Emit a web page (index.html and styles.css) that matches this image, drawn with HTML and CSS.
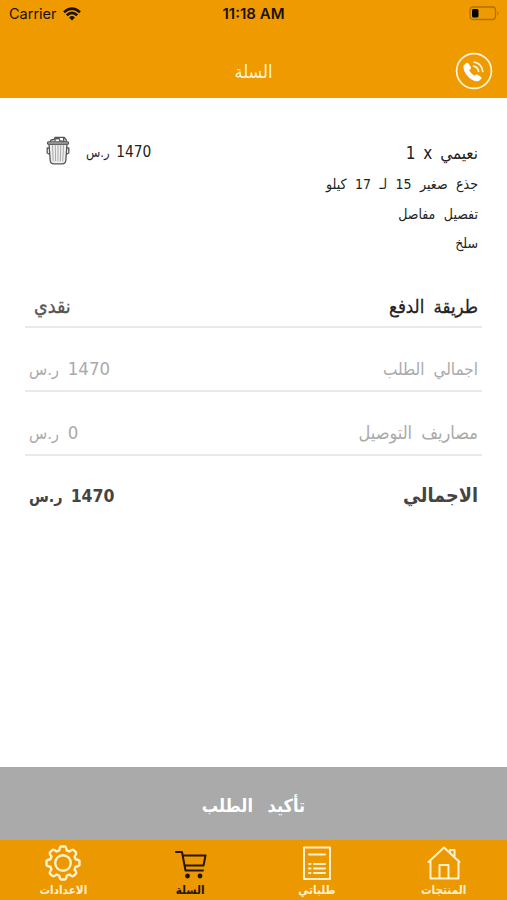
FILE: index.html
```html
<!DOCTYPE html>
<html lang="ar" dir="rtl">

<head>
    <meta charset="UTF-8">
    <meta name="viewport" content="width=device-width, initial-scale=1.0">
    <title>السلة</title>
    <link rel="stylesheet" href="styles.css">
</head>

<body>
    <div class="screen">
        <div class="status-bar" dir="ltr">
            <div class="carrier">
                <span>Carrier</span>
                <svg class="wifi" viewBox="0 0 18 14">
                    <path d="M1 5.2 Q9 -2 17 5.2" />
                    <path d="M3.8 8.2 Q9 3.4 14.2 8.2" />
                    <path class="wifi-dot" d="M6.1 10.4 Q9 7.8 11.9 10.4 L9 13.6 Z" />
                </svg>
            </div>
            <div class="clock">11:18 AM</div>
            <div class="battery-side">
                <svg class="battery" viewBox="0 0 31 15">
                    <rect x="1" y="1" width="25.5" height="12.5" rx="3" />
                    <path class="battery-tip" d="M28.3 5.2 Q31 7.2 28.3 9.4 Z" />
                    <rect class="battery-level" x="3" y="3" width="6.5" height="8.5" rx="1.5" />
                </svg>
            </div>
        </div>

        <header class="header" dir="ltr">
            <h1 class="header-title">السلة</h1>
            <svg class="call-btn" viewBox="0 0 38 38">
                <circle cx="19" cy="19" r="17.4" />
                <path class="phone" d="M8.6 13.6 L11.4 11 Q12.6 10.4 13.5 11.6 L15.8 15 Q16.4 16.2 15.5 17 L14.1 18.2 Q15.7 21.4 19.3 23.7 L20.9 22.6 Q21.8 22.1 22.8 22.8 L26 25 Q27 26 26.1 27 L23.8 29 Q19.5 30.5 14 25.6 Q7.4 19.4 8.6 13.6 Z" />
                <path d="M19.2 10.2 Q26.8 11.5 27.8 19.5" />
                <path d="M18.6 14.2 Q22.9 15 23.6 19.4" />
            </svg>
        </header>

        <main class="content">
            <section class="item">
                <div class="item-info">
                    <div class="item-name"><bdi>نعيمي</bdi> <bdi>x</bdi> <bdi>1</bdi></div>
                    <div class="item-size">جذع صغير 15 لـ 17 كيلو</div>
                    <div class="item-cut">تفصيل مفاصل</div>
                    <div class="item-skin">سلخ</div>
                </div>
                <div class="item-side">
                    <div class="item-price"><span class="num">1470</span> ر.س</div>
                    <svg class="trash" viewBox="0 0 24 29">
                        <path d="M4 6 L5 4 L8 3.5 L9 1.3 L18 1.3 L20 3.5 L20.5 6" />
                        <path d="M9 5 V3 L13 2.4 L14 5 L18 5.3 L17.5 2" />
                        <path class="can" d="M3 8 L4.2 24.5 Q4.4 27.8 8 27.8 H16 Q19.6 27.8 19.8 24.5 L21 8 Z" />
                        <rect class="lid" x="1.5" y="5.8" width="21" height="2.4" rx="1" />
                        <path d="M2.6 12 H1.2 V17 L3 18 M21.4 12 H22.8 V17 L21 18" />
                        <path class="ribs" d="M6.5 9.5 L7.2 25 M9.3 9.5 L9.6 25 M12 9.5 V25 M14.7 9.5 L14.4 25 M17.5 9.5 L16.8 25" />
                    </svg>
                </div>
            </section>

            <section class="summary">
                <div class="row row-payment">
                    <span class="label">طريقة الدفع</span>
                    <span class="value">نقدي</span>
                </div>
                <div class="row row-light">
                    <span class="label">اجمالي الطلب</span>
                    <span class="value"><span class="num">1470</span> ر.س</span>
                </div>
                <div class="row row-light">
                    <span class="label label-delivery">مصاريف التوصيل</span>
                    <span class="value"><span class="num">0</span> ر.س</span>
                </div>
                <div class="row row-total">
                    <span class="label">الاجمالي</span>
                    <span class="value"><span class="num">1470</span> ر.س</span>
                </div>
            </section>
        </main>

        <button class="confirm-btn">تأكيد الطلب</button>

        <nav class="tab-bar">
            <a class="tab">
                <svg viewBox="0 0 36 36">
                    <path d="M2.5 17 L18 2.5 L33.5 17 M4.5 15.5 V33.5 H32.5 V15.5 M13.5 33 V20 H22.5 V33 M24 7 V5 H28.5 V12" />
                </svg>
                <span>المنتجات</span>
            </a>
            <a class="tab">
                <svg viewBox="0 0 36 36">
                    <path d="M5 2.5 H31 V34 H5 Z M10 9.5 H26 M15 19 H26 M15 23.5 H26 M15 28 H26 M10 19 H11.5 M10 23.5 H11.5 M10 28 H11.5" />
                </svg>
                <span>طلباتي</span>
            </a>
            <a class="tab active">
                <svg viewBox="0 0 36 36">
                    <path d="M4 7 H10 L13.5 25.5 H31 M10.8 10.5 H33.5 L31.5 20.5 H12.6" />
                    <circle class="wheel" cx="15.5" cy="31" r="2.4" />
                    <circle class="wheel" cx="28" cy="31" r="2.4" />
                </svg>
                <span>السلة</span>
            </a>
            <a class="tab">
                <svg class="gear" viewBox="0 0 36 36">
                    <path d="M14.2 5.4 Q15 1.5 16 1.5 H20 Q21 1.5 21.8 5.4 L24.4 6.5 Q27.6 4 28.6 5 L31 7.4 Q32 8.4 29.5 11.6 L30.6 14.2 Q34.5 15 34.5 16 V20 Q34.5 21 30.6 21.8 L29.5 24.4 Q32 27.6 31 28.6 L28.6 31 Q27.6 32 24.4 29.5 L21.8 30.6 Q21 34.5 20 34.5 H16 Q15 34.5 14.2 30.6 L11.6 29.5 Q8.4 32 7.4 31 L5 28.6 Q4 27.6 6.5 24.4 L5.4 21.8 Q1.5 21 1.5 20 V16 Q1.5 15 5.4 14.2 L6.5 11.6 Q4 8.4 5 7.4 L7.4 5 Q8.4 4 11.6 6.5 Z" />
                    <circle cx="18" cy="18" r="7.8" />
                </svg>
                <span>الاعدادات</span>
            </a>
        </nav>
    </div>
</body>

</html>
```

FILE: styles.css
```css
body {
    margin: 0;
    background: #fff;
    font-family: "DejaVu Sans Condensed", "DejaVu Sans", sans-serif;
}

.screen {
    display: flex;
    flex-direction: column;
    height: 900px;
    overflow: hidden;
}

svg {
    display: block;
    fill: none;
    stroke-linecap: round;
    stroke-linejoin: round;
}

/* status bar */
.status-bar {
    display: flex;
    align-items: center;
    height: 27px;
    padding: 0 7px 1px 9px;
    background-color: #EF9B00;
    color: #1c1200;
    font-family: Inter, sans-serif;
    font-size: 14.5px;
}

.carrier,
.battery-side {
    flex: 1;
    display: flex;
    align-items: center;
    gap: 6px;
}

.battery-side {
    justify-content: flex-end;
}

.clock {
    margin-right: 2px;
    font-size: 15px;
    font-weight: 600;
}

.wifi {
    width: 18px;
    height: 14px;
    stroke: #1c1200;
    stroke-width: 2.6;
    stroke-linecap: butt;
}

.wifi-dot {
    fill: #1c1200;
    stroke: none;
}

.battery {
    width: 31px;
    height: 15px;
    stroke: #ae7200;
    stroke-width: 1.3;
}

.battery-tip {
    fill: #ae7200;
    stroke: none;
}

.battery-level {
    fill: #000;
    stroke: none;
}

/* header */
.header {
    display: flex;
    align-items: center;
    height: 70px;
    padding: 0 14px;
    background-color: #EF9B00;
}

.header-title {
    flex: 1;
    margin: 17px 0 0 38px;
    color: #fff3dc;
    font-size: 18px;
    font-weight: normal;
    text-align: center;
}

.call-btn {
    width: 38px;
    height: 38px;
    margin-top: 15px;
    stroke: #fff3dc;
    stroke-width: 1.7;
}

.phone {
    fill: #fff;
    stroke: none;
}

/* cart item */
.content {
    flex: 1;
    padding: 38px 25px 0;
}

.item {
    display: flex;
    justify-content: space-between;
    height: 138px;
    padding: 0 4px 0 21px;
    color: #222;
}

.item-info {
    font-size: 14px;
    line-height: 29.5px;
    word-spacing: 4.5px;
}

.item-name {
    font-size: 17px;
    line-height: 34px;
    word-spacing: 3px;
}

.item-side {
    display: flex;
    gap: 16px;
    height: 31px;
}

.item-price {
    font-size: 13px;
    line-height: 33px;
    word-spacing: 3px;
}

.item-price .num {
    font-size: 15.3px;
}

.trash {
    width: 24px;
    height: 29px;
    stroke: #555;
    stroke-width: 1.3;
}

.can {
    fill: #eee;
}

.lid {
    fill: #ccc;
}

.ribs {
    stroke: #aaa;
    stroke-width: 1;
}

/* order summary */
.row {
    display: flex;
    justify-content: space-between;
    align-items: center;
    box-sizing: border-box;
    height: 64px;
    padding: 19px 4px 0;
    border-bottom: 2px solid #e9e9e9;
    font-size: 17px;
    word-spacing: 4px;
}

.row .value .num {
    font-size: 18.5px;
}

.row-payment {
    height: 54px;
    padding-top: 13px;
    color: #222;
    font-size: 18.5px;
    -webkit-text-stroke: 0.3px;
}

.row-payment .value {
    padding-left: 5px;
    color: #555;
    font-size: 19.5px;
}

.row-light {
    color: #aaa;
}

.label-delivery {
    font-size: 18px;
}

.row-light .value {
    font-size: 16.5px;
}

.row-total {
    padding-top: 15px;
    border-bottom: none;
    color: #444;
    font-size: 19.7px;
    font-weight: bold;
}

.row-total .value {
    font-size: 16px;
    word-spacing: 3px;
}

.row-total .value .num {
    font-size: 17.5px;
}

/* bottom */
.confirm-btn {
    height: 73px;
    padding: 4px 0 0;
    border: none;
    background-color: #AAAAAA;
    color: #fff;
    font-family: inherit;
    font-size: 18px;
    font-weight: bold;
    word-spacing: 9px;
}

.tab-bar {
    display: flex;
    height: 60px;
    background-color: #EC9800;
}

.tab {
    flex: 1;
    display: flex;
    flex-direction: column;
    align-items: center;
    padding-top: 5px;
    color: #fff0d0;
    font-size: 11.7px;
    font-weight: bold;
    line-height: 18px;
}

.tab svg {
    width: 36px;
    height: 36px;
    stroke: currentColor;
    stroke-width: 2;
}

.tab .gear {
    stroke-width: 2.4;
}

.tab.active {
    color: #241600;
}

.wheel {
    fill: currentColor;
    stroke: none;
}
```
